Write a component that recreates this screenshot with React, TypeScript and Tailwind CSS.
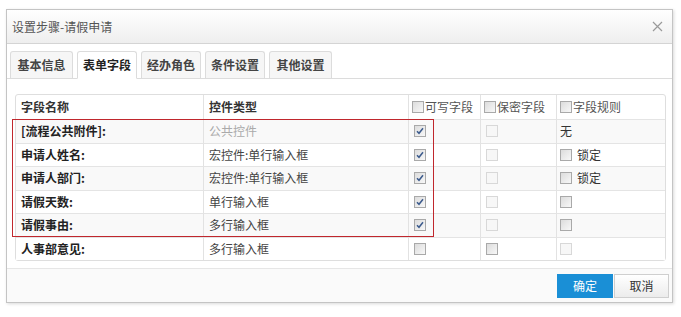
import { Fragment } from "react";

type Box = "on" | "off" | "dim" | "none";

type Row = {
    name: string;
    type: string;
    typeMuted?: boolean;
    write: Box;
    secret: Box;
    rule: { box: Box; text?: string };
};

const rows: Row[] = [
    { name: "[流程公共附件]:", type: "公共控件", typeMuted: true, write: "on", secret: "dim", rule: { box: "none", text: "无" } },
    { name: "申请人姓名:", type: "宏控件:单行输入框", write: "on", secret: "dim", rule: { box: "off", text: "锁定" } },
    { name: "申请人部门:", type: "宏控件:单行输入框", write: "on", secret: "dim", rule: { box: "off", text: "锁定" } },
    { name: "请假天数:", type: "单行输入框", write: "on", secret: "dim", rule: { box: "off" } },
    { name: "请假事由:", type: "多行输入框", write: "on", secret: "dim", rule: { box: "off" } },
    { name: "人事部意见:", type: "多行输入框", write: "off", secret: "off", rule: { box: "dim" } },
];

const tabs = ["基本信息", "表单字段", "经办角色", "条件设置", "其他设置"];
const tabWidths = ["w-[63px]", "w-[60px]", "w-[60px]", "w-[60px]", "w-[63px]"];

function Check({ state }: { state: Box }) {
    if (state === "none") return null;
    const dim = state === "dim";
    return (
        <span
            className={
                "inline-flex w-[12px] h-[12px] items-center justify-center border " +
                (dim
                    ? "border-[#d8d8d8] bg-[#f7f7f7]"
                    : "border-[#a9a9a9] bg-gradient-to-br from-[#dcdcdc] to-[#f8f8f8]")
            }
        >
            {state === "on" && (
                <svg width="8" height="8" viewBox="0 0 8 8">
                    <path d="M1 4.2 L3 6.3 L7 1.3" fill="none" stroke="#3b5a8c" strokeWidth="1.5" />
                </svg>
            )}
        </span>
    );
}

export default function App() {
    return (
        <main
            className="w-[681px] h-[317px] bg-white pt-[9px] pl-[6px] text-[12px] text-[#333]"
            style={{ fontFamily: '"Noto Sans CJK SC", "Noto Sans", sans-serif' }}
        >
            <div className="w-[667px] h-[294px] border border-[#c4c4c4] shadow-[1px_1px_3px_rgba(0,0,0,0.15)] flex flex-col bg-white">
                {/* Header */}
                <div className="h-[34px] flex items-center justify-between pl-[5px] pr-[9px] bg-gradient-to-b from-white to-[#eeeeee] border-b border-[#d4d4d4]">
                    <span className="text-[12px] text-[#555]">设置步骤-请假申请</span>
                    <svg width="11" height="11" viewBox="0 0 11 11">
                        <path d="M1 1 L10 10 M10 1 L1 10" stroke="#9a9a9a" strokeWidth="1.2" />
                    </svg>
                </div>

                {/* Tabs */}
                <div className="mt-[8px] flex items-end gap-[4px] pl-[3px] border-b border-[#dcdcdc] h-[27px]">
                    {tabs.map((t, i) => (
                        <div
                            key={t}
                            className={
                                tabWidths[i] +
                                " h-[27px] flex items-center justify-center rounded-t-[3px] border border-[#dcdcdc] font-bold text-[12px] " +
                                (i === 1 ? "bg-white border-b-white -mb-px h-[28px] text-[#222]" : "bg-[#f6f6f6] border-b-0 text-[#444]")
                            }
                        >
                            {t}
                        </div>
                    ))}
                </div>

                {/* Table */}
                <div className="relative mt-[15px] ml-[8px] w-[651px] border border-[#dedede] rounded-[3px]">
                    <div className="grid grid-cols-[188px_205px_72px_76px_108px]">
                        <div className="h-[24px] flex items-center pl-[5px] font-bold border-r border-[#e2e2e2]">字段名称</div>
                        <div className="h-[24px] flex items-center pl-[5px] font-bold border-r border-[#e2e2e2]">控件类型</div>
                        <div className="h-[24px] flex items-center pl-[3px] gap-px text-[#555] border-r border-[#e2e2e2]">
                            <Check state="off" />可写字段
                        </div>
                        <div className="h-[24px] flex items-center pl-[3px] gap-px text-[#555] border-r border-[#e2e2e2]">
                            <Check state="off" />保密字段
                        </div>
                        <div className="h-[24px] flex items-center pl-[3px] gap-px text-[#555]">
                            <Check state="off" />字段规则
                        </div>
                        {rows.map((r, i) => {
                            const bg = i % 2 === 0 ? "bg-[#f9f9f9]" : "bg-white";
                            const cell = "h-[23.5px] flex items-center border-t border-[#e4e4e4] " + bg;
                            return (
                                <Fragment key={r.name}>
                                    <div className={cell + " pl-[5px] font-bold text-[#222] border-r border-r-[#e2e2e2]"}>{r.name}</div>
                                    <div className={cell + " pl-[5px] border-r border-r-[#e2e2e2] " + (r.typeMuted ? "text-[#aaa]" : "text-[#444]")}>
                                        {r.type}
                                    </div>
                                    <div className={cell + " pl-[5px] border-r border-r-[#e2e2e2]"}>
                                        <Check state={r.write} />
                                    </div>
                                    <div className={cell + " pl-[5px] border-r border-r-[#e2e2e2]"}>
                                        <Check state={r.secret} />
                                    </div>
                                    <div className={cell + " pl-[3px] gap-[5px]"}>
                                        <Check state={r.rule.box} />
                                        {r.rule.text && <span className="text-[#333]">{r.rule.text}</span>}
                                    </div>
                                </Fragment>
                            );
                        })}
                    </div>
                    {/* red highlight frame */}
                    <div className="absolute left-[-4px] top-[24px] w-[422px] h-[118px] border border-[#c0272d] pointer-events-none" />
                </div>

                {/* Footer */}
                <div className="mt-auto h-[34px] border-t border-[#e6e6e6] bg-[#fafafa] flex items-center justify-end gap-[1px] pr-[3px]">
                    <button className="w-[56px] h-[24px] bg-[#1a8fd6] text-white text-[12px]">确定</button>
                    <button className="w-[55px] h-[24px] border border-[#cfcfcf] bg-gradient-to-b from-white to-[#ececec] text-[#333] text-[12px]">
                        取消
                    </button>
                </div>
            </div>
        </main>
    );
}
